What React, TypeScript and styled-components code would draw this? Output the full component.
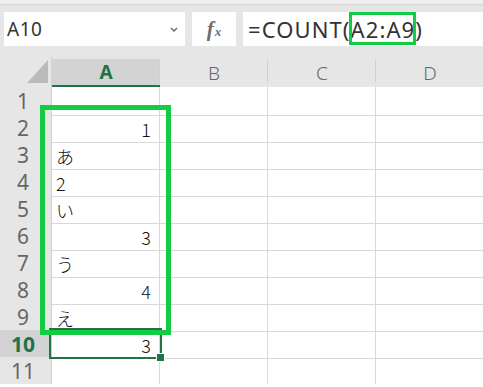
import React from 'react';
import styled, { createGlobalStyle } from 'styled-components';

const GlobalStyle = createGlobalStyle`
  html, body {
    margin: 0;
    padding: 0;
    background: #ffffff;
    overflow: hidden;
  }
  body {
    font-family: "Noto Sans", "Liberation Sans", sans-serif;
  }
`;

const EXCEL_GREEN = '#217346';
const MARK_GREEN = '#14cc44';
const GRID = '#d8d8d8';

const Toolbar = styled.div`
  background: #e6e6e6;
  height: 57px;
  box-sizing: border-box;
`;

const TopStrip = styled.div`
  height: 4px;
  background: #efefef;
  border-bottom: 1px solid #d6d6d6;
`;

const BarRow = styled.div`
  display: flex;
  gap: 7px;
  padding: 7px 0 0 4px;
  height: 34px;
`;

const NameBox = styled.div`
  width: 181px;
  background: #fff;
  display: flex;
  align-items: center;
  justify-content: space-between;
  padding: 0 6px 0 3px;
  box-sizing: border-box;
  font-size: 19px;
  letter-spacing: 0.5px;
  color: #333;
`;

const FxBox = styled.div`
  width: 44px;
  background: #fff;
  display: flex;
  align-items: center;
  justify-content: center;
  font-family: "Liberation Serif", serif;
  font-style: italic;
  font-weight: bold;
  font-size: 21px;
  color: #6d6d6d;
  padding-top: 1px;
  box-sizing: border-box;

  small {
    font-size: 13px;
    margin-left: 1px;
    position: relative;
    top: 2px;
  }
`;

const FormulaBox = styled.div`
  flex: 1;
  background: #fff;
  display: flex;
  align-items: center;
  padding-left: 5px;
  font-size: 22px;
  letter-spacing: 1.1px;
  color: #333;
  white-space: nowrap;
`;

const RefMark = styled.span`
  position: relative;

  &::after {
    content: '';
    position: absolute;
    left: -2px;
    right: -1px;
    top: -2px;
    bottom: -1px;
    border: 3px solid ${MARK_GREEN};
  }
`;

const Sheet = styled.div`
  position: relative;
`;

const Row = styled.div`
  display: grid;
  grid-template-columns: 52px repeat(4, 108px);
  height: 27px;
`;

const HeaderRow = styled(Row)`
  height: 30px;
  background: #e6e6e6;
`;

const Corner = styled.div`
  display: flex;
  justify-content: flex-end;
  align-items: flex-start;
  padding: 3px 3px 0 0;
  border-right: 1px solid #d4d4d4;
  box-sizing: border-box;

  &::before {
    content: '';
    width: 0;
    height: 0;
    border-left: 21px solid transparent;
    border-bottom: 23px solid #bababa;
  }
`;

const ColHead = styled.div<{ $active?: boolean }>`
  position: relative;
  display: flex;
  align-items: center;
  justify-content: center;
  font-size: 19px;
  color: ${(p) => (p.$active ? EXCEL_GREEN : '#666')};
  font-weight: ${(p) => (p.$active ? 700 : 300)};
  background: ${(p) => (p.$active ? '#d3d3d3' : 'transparent')};
  margin-top: ${(p) => (p.$active ? '2px' : '0')};
  border-bottom: ${(p) => (p.$active ? `2px solid ${EXCEL_GREEN}` : 'none')};
  padding-top: ${(p) => (p.$active ? '0' : '2px')};
  box-sizing: border-box;

  &::after {
    content: '';
    position: absolute;
    right: 0;
    top: 2px;
    height: 23px;
    border-right: 1px solid #d0d0d0;
  }
`;

const RowHead = styled.div<{ $active?: boolean }>`
  display: flex;
  align-items: center;
  justify-content: center;
  padding-right: 5px;
  font-size: 21px;
  color: ${(p) => (p.$active ? EXCEL_GREEN : '#666')};
  font-weight: ${(p) => (p.$active ? 700 : 400)};
  background: ${(p) => (p.$active ? '#d3d3d3' : '#e6e6e6')};
  border-right: 1px solid #cfcfcf;
  border-bottom: 1px solid #d6d6d6;
  box-sizing: border-box;
`;

const Cell = styled.div<{ $num?: boolean }>`
  display: flex;
  align-items: flex-end;
  justify-content: ${(p) => (p.$num ? 'flex-end' : 'flex-start')};
  padding: 0 8px 1px 4px;
  font-family: "Noto Sans CJK JP", "Noto Sans", sans-serif;
  font-weight: 300;
  font-size: 18px;
  line-height: 1.3;
  color: #111;
  border-right: 1px solid ${GRID};
  border-bottom: 1px solid ${GRID};
  box-sizing: border-box;
`;

const Selection = styled.div`
  position: absolute;
  left: 49px;
  top: 271px;
  width: 113px;
  height: 31px;
  border: 2px solid ${EXCEL_GREEN};
  box-sizing: border-box;
`;

const FillHandle = styled.div`
  position: absolute;
  right: -5px;
  bottom: -5px;
  width: 7px;
  height: 7px;
  background: ${EXCEL_GREEN};
  border: 1px solid #fff;
`;

const RangeMark = styled.div`
  position: absolute;
  left: 40px;
  top: 48px;
  width: 131px;
  height: 230px;
  border: 5px solid ${MARK_GREEN};
  box-sizing: border-box;
`;

const ChevronIcon = () => (
  <svg width="10" height="7" viewBox="0 0 10 7">
    <path d="M2 2 L5 5 L8 2" fill="none" stroke="#666" strokeWidth="1.4" />
  </svg>
);

const values: { v: string; num?: boolean }[] = [
  { v: '' },
  { v: '1', num: true },
  { v: 'あ' },
  { v: '2' },
  { v: 'い' },
  { v: '3', num: true },
  { v: 'う' },
  { v: '4', num: true },
  { v: 'え' },
  { v: '3', num: true },
  { v: '' },
];

const App: React.FC = () => (
  <>
    <GlobalStyle />
    <Toolbar>
      <TopStrip />
      <BarRow>
        <NameBox>
          A10
          <ChevronIcon />
        </NameBox>
        <FxBox>
          f<small>x</small>
        </FxBox>
        <FormulaBox>
          =COUNT(<RefMark>A2:A9</RefMark>)
        </FormulaBox>
      </BarRow>
    </Toolbar>
    <Sheet>
      <HeaderRow>
        <Corner />
        <ColHead $active>A</ColHead>
        <ColHead>B</ColHead>
        <ColHead>C</ColHead>
        <ColHead>D</ColHead>
      </HeaderRow>
      {values.map((cell, i) => (
        <Row key={i}>
          <RowHead $active={i === 9}>{i + 1}</RowHead>
          <Cell $num={cell.num}>{cell.v}</Cell>
          <Cell />
          <Cell />
          <Cell />
        </Row>
      ))}
      <Selection>
        <FillHandle />
      </Selection>
      <RangeMark />
    </Sheet>
  </>
);

export default App;
